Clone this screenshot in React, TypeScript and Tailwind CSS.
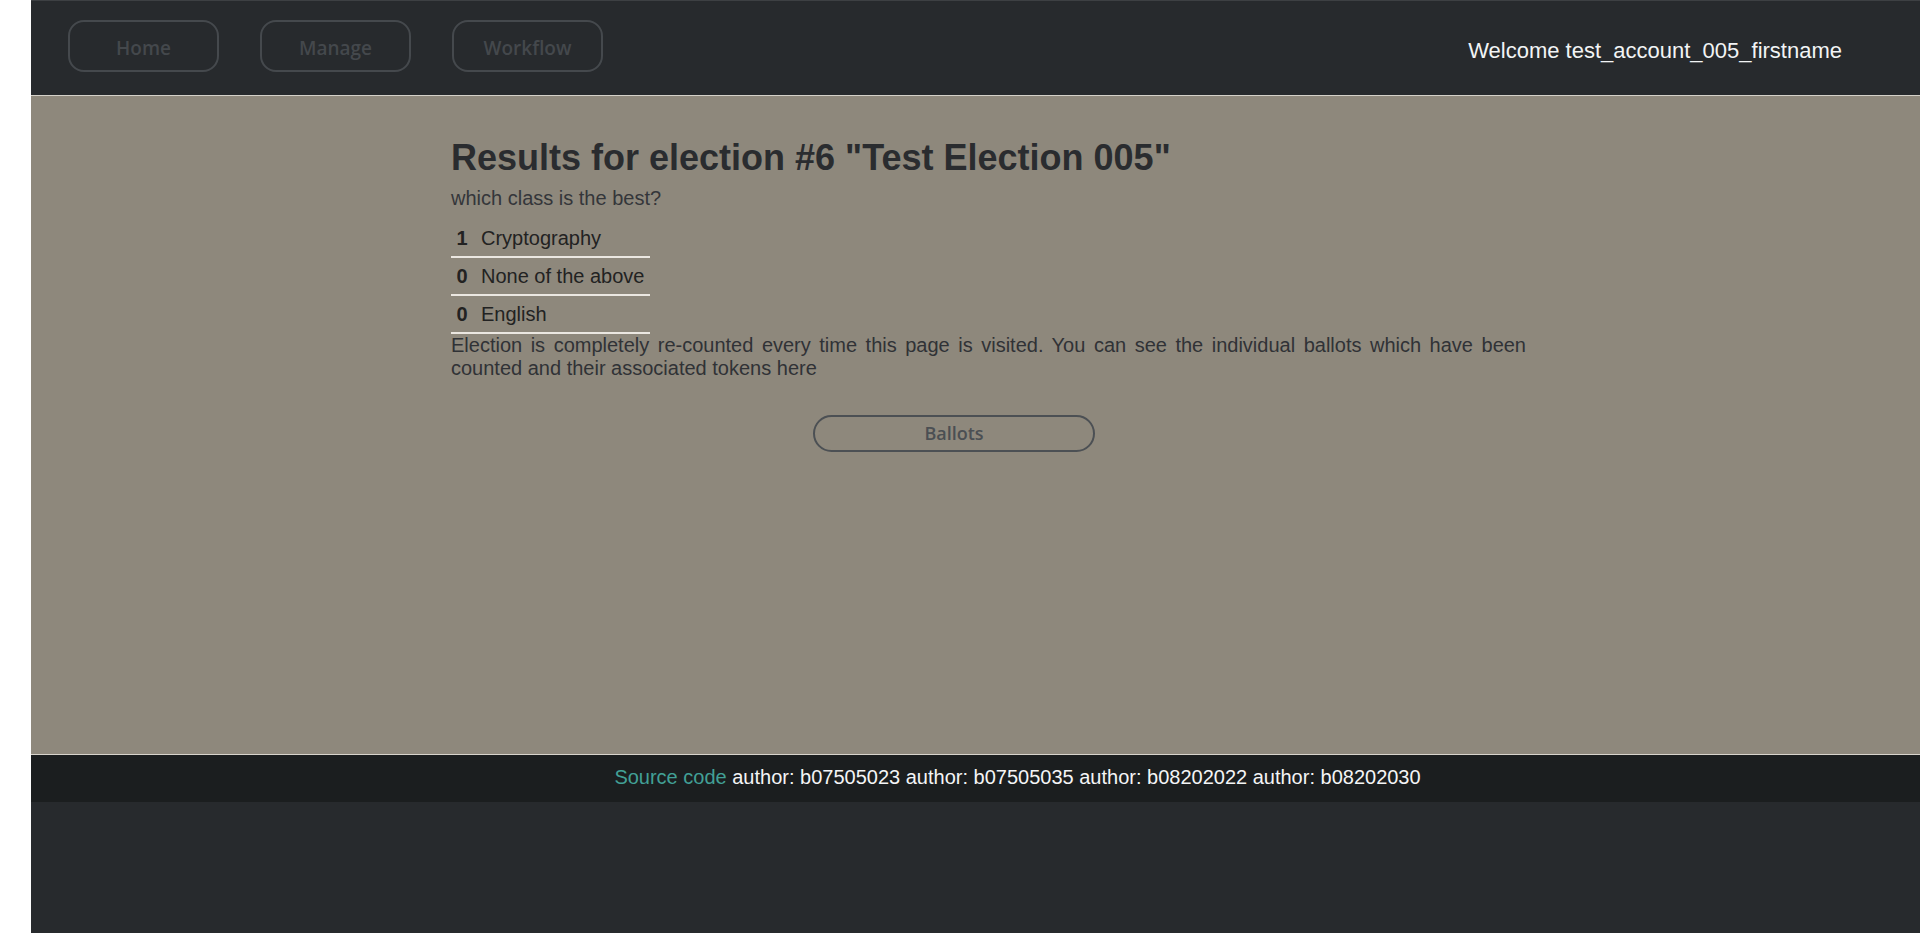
import React from "react";

const navBtn =
  "w-[151px] h-[52px] rounded-[16px] border-2 border-[#45494d] flex items-center justify-center pt-[4px] text-[19px] font-semibold text-[#44484c]";

export default function App() {
  const rows = [
    { n: 1, label: "Cryptography" },
    { n: 0, label: "None of the above" },
    { n: 0, label: "English" },
  ];
  return (
    <div
      className="w-[1920px] h-[942px] bg-white pl-[31px] overflow-hidden"
      style={{ fontFamily: '"Liberation Sans", Arial, sans-serif' }}
    >
      <div className="w-[1889px] h-[933px] flex flex-col bg-[#272a2d]">
        {/* Header */}
        <div className="h-[96px] shrink-0 bg-[#272a2d] border-t border-t-[#3d4043] border-b border-b-[#d5d1c9] flex items-start">
          <div
            className="flex gap-[41px] ml-[37px] pt-[19px]"
            style={{ fontFamily: '"Open Sans", "Noto Sans", sans-serif' }}
          >
            <div className={navBtn}>Home</div>
            <div className={navBtn}>Manage</div>
            <div className={navBtn}>Workflow</div>
          </div>
          <div className="ml-auto mr-[78px] pt-[37px] text-[22px] leading-[normal] text-[#f2f4f5]">
            Welcome test_account_005_firstname
          </div>
        </div>

        {/* Main */}
        <div className="h-[658px] shrink-0 bg-[#8e887c]">
          <div className="ml-[420px] w-[1075px] pt-[41px]">
            <h1 className="text-[36px] font-bold leading-[normal] text-[#2a2c2f]">
              Results for election #6 "Test Election 005"
            </h1>
            <p className="mt-[8px] text-[20px] leading-[normal] text-[#34363a]">
              which class is the best?
            </p>
            <div className="mt-[10px] w-[199px]">
              {rows.map((r, i) => (
                <div
                  key={i}
                  className="flex pt-[7px] pb-[6px] border-b-2 border-b-[#ebe7e1] text-[20px] leading-[normal] text-[#222222]"
                >
                  <span className="w-[22px] text-center font-bold">{r.n}</span>
                  <span className="ml-[8px]">{r.label}</span>
                </div>
              ))}
            </div>
            <p className="text-[20px] leading-[normal] text-[#303236] text-justify">
              Election is completely re-counted every time this page is visited. You can see the
              individual ballots which have been counted and their associated tokens here
            </p>
            <div
              className="mt-[35px] ml-[362px] w-[282px] h-[37px] rounded-full border-2 border-[#4c5054] flex items-center justify-center text-[18px] font-semibold text-[#4b4f53]"
              style={{ fontFamily: '"Open Sans", "Noto Sans", sans-serif' }}
            >
              Ballots
            </div>
          </div>
        </div>

        {/* Footer */}
        <div className="h-[48px] shrink-0 bg-[#1b1e1f] border-t border-t-[#d8d4cc] pl-[84px] pt-[11px] text-center text-[20px] leading-[normal] text-[#f4f5f6]">
          <span className="text-[#42a096]">Source code</span> author: b07505023 author: b07505035
          author: b08202022 author: b08202030
        </div>

        <div className="flex-1 bg-[#272a2d]" />
      </div>
    </div>
  );
}
